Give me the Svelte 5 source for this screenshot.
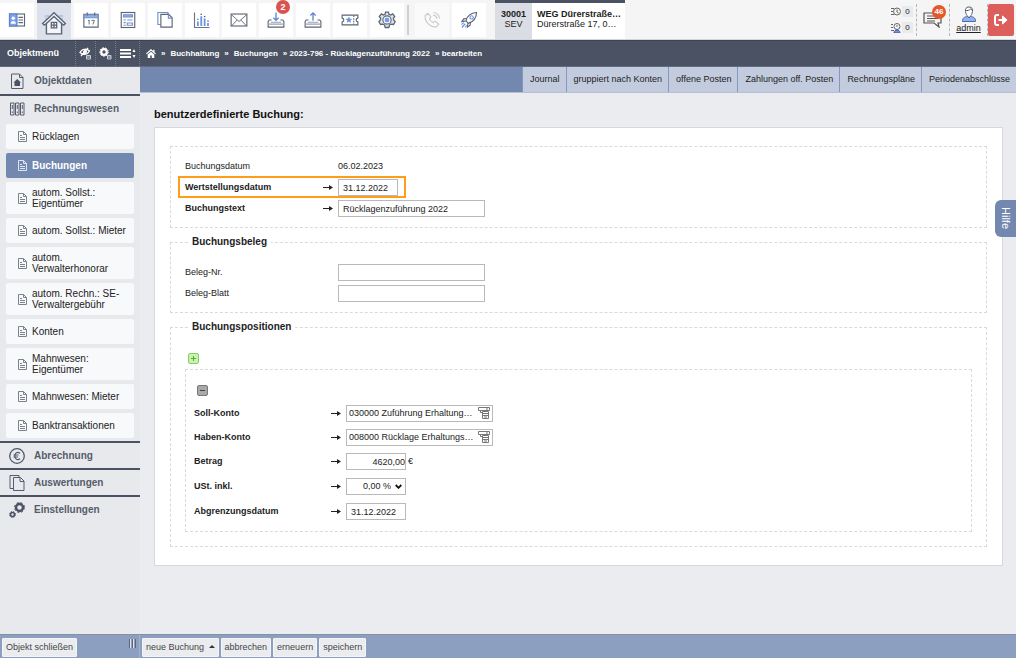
<script lang="ts">
  const tools = [
    { id: 'card', label: 'Adressen' },
    { id: 'house', label: 'Objekte', active: true },
    { id: 'calendar', label: 'Kalender' },
    { id: 'calc', label: 'Buchhaltung' },
    { id: 'docs', label: 'Dokumente' },
    { id: 'chart', label: 'Statistik' },
    { id: 'mail', label: 'Nachrichten' },
    { id: 'inbox', label: 'Eingang', badge: 2 },
    { id: 'outbox', label: 'Ausgang' },
    { id: 'ticket', label: 'Tickets' },
    { id: 'gear', label: 'Einstellungen' },
  ];
  const extraTools = [
    { id: 'phone', label: 'Telefon' },
    { id: 'rocket', label: 'Schnellstart' },
  ];

  const subItems = [
    'Rücklagen',
    'Buchungen',
    'autom. Sollst.: Eigentümer',
    'autom. Sollst.: Mieter',
    'autom. Verwalterhonorar',
    'autom. Rechn.: SE-Verwaltergebühr',
    'Konten',
    'Mahnwesen: Eigentümer',
    'Mahnwesen: Mieter',
    'Banktransaktionen',
  ];

  const tabs = [
    'Journal',
    'gruppiert nach Konten',
    'offene Posten',
    'Zahlungen off. Posten',
    'Rechnungspläne',
    'Periodenabschlüsse',
  ];

  let current = $state('Buchungen');
  let valueDate = $state('31.12.2022');
  let bookingText = $state('Rücklagenzuführung 2022');
  let docNo = $state('');
  let docPage = $state('');
  let debit = $state('030000 Zuführung Erhaltung…');
  let credit = $state('008000 Rücklage Erhaltungs…');
  let amount = $state('4620,00');
  let vat = $state('0,00 %');
  let accrualDate = $state('31.12.2022');
</script>

{#snippet toolIcon(id: string)}
  <svg class="tool-icon" class:big={id === 'house'} viewBox="0 0 24 24" fill="none" stroke="#5c6575" stroke-width="1.5" aria-hidden="true">
    {#if id === 'card'}
      <rect x="2" y="4" width="20" height="16" />
      <path d="M2 4h10v16H2z" fill="#7aa2ee" stroke="#5f82cc" />
      <circle cx="7" cy="9.500" r="2.200" fill="#fff" stroke="none" />
      <path d="M3.500 17c0-5 7-5 7 0z" fill="#fff" stroke="none" />
      <path d="M14 8.500h6M14 12h6M14 15.500h6" />
    {:else if id === 'house'}
      <path d="M3.500 5.500h4M16.500 5.500h4M4 8h2M18 8h2" stroke="#a8bce8" />
      <path d="M12 2.500 1.500 12.500l1.500 1.500 2-1.500V22h14v-9.500l2 1.500 1.500-1.500z" fill="#f4f6fb" stroke-width="1.300" />
      <path d="M5 12.500 12 6l7 6.500" stroke-width="1.200" />
      <path d="M9.500 11.500h5v5h-5zM12 11.500v5M9.500 14h5" stroke-width="1.200" />
    {:else if id === 'calendar'}
      <path d="M2.500 4.500h19v17h-19z" />
      <path d="M2.500 5h19v4h-19z" fill="#8fb0ee" stroke="#7590c8" />
      <path d="M7 2v4M17 2v4" />
      <path d="m8 13 1.500-1v6M12.500 12.500h4l-2 5.500" stroke-width="1.200" />
    {:else if id === 'calc'}
      <rect x="3" y="2" width="18" height="20" />
      <path d="M6 5h12v3H6z" fill="#8fb0ee" stroke="#7590c8" />
      <path d="M6 12h3M11 12h7M6 15.500h3M6 19h3M11 16h7v3h-7z" stroke="#7590c8" />
    {:else if id === 'docs'}
      <path d="M6 18H2.500V2H16v2.500" stroke="#6f8fd0" />
      <path d="M6.500 4.500H17l4.500 4.500v12.500h-15z" fill="#fff" />
      <path d="M16.500 4.500v5h5" stroke="#6f8fd0" />
    {:else if id === 'chart'}
      <path d="M2 2v20h20" stroke="#6d7583" />
      <path d="M6.500 14v6M11 7v13M15.500 10v10M20 16v4" stroke="#6c93df" stroke-width="2.400" />
      <path d="M5.500 11h2M10 4.500h2M14.500 7.500h2M19 13.500h2" stroke="#56637d" />
    {:else if id === 'mail'}
      <rect x="1.500" y="4" width="21" height="16" />
      <path d="m2 5 10 9L22 5M2 20l7.500-8M22 20l-7.500-8" stroke-width="1.200" />
    {:else if id === 'inbox' || id === 'outbox'}
      <path d="M6 12H3l-1.500 2v7.500h21V14L21 12h-3" />
      <path d="M2 17.500h20M5 15h14" stroke="#9aa1ad" />
      {#if id === 'inbox'}
        <path d="M12 2v10M8.500 9l3.500 3.500L15.500 9" stroke="#5f86d6" stroke-width="1.800" />
      {:else}
        <path d="M12 13V3M8.500 6 12 2.500 15.500 6" stroke="#5f86d6" stroke-width="1.800" />
      {/if}
    {:else if id === 'ticket'}
      <path d="M1.500 5.500h21v4c-3 .5-3 4.500 0 5v4h-21v-4c3-.5 3-4.500 0-5z" />
      <path d="M17 6v12" stroke-dasharray="2 1.500" />
      <path d="m10.500 8.500 1 2.300 2.500.2-2 1.500.6 2.500-2.100-1.300L8.400 15l.6-2.500L7 11l2.500-.2z" fill="#6c93df" stroke="#6c93df" stroke-width="1" />
    {:else if id === 'gear'}
      <path d="m10 1.500h4l.6 3 2.200 1 2.800-1.600 2.700 3.500-1.800 2.300.4 2.300 2 2.200-2.200 3.800-3-.6-2.300 1.300-.9 3.300h-4.900l-.9-3.300-2.300-1.300-3 .6L1.200 14.200l2-2.200.4-2.300-1.900-2.300 2.800-3.500 2.700 1.600 2.200-1z" fill="#dfe2e8" stroke-width="1.700" />
      <circle cx="12" cy="12" r="5.500" fill="#fff" />
      <circle cx="12" cy="12" r="2.500" fill="#6f9bf0" stroke="#6f9bf0" />
    {:else if id === 'phone'}
      <g stroke="#c8c9cb">
        <path d="m3 6 3.500-3 4 5-2 2.500c1 2.500 2.500 4 5 5l2.500-2 5 4-3 3.500C10.500 22.500 1.500 14 3 6z" />
        <path d="M14 2c4.500.5 7.500 3.500 8 8M13.500 5.500c3 .3 4.800 2 5 5" />
      </g>
    {:else}
      <path d="M8 13c1.500-6 6-10.500 14-11 0 7.500-4.500 12.500-11 14.500z" />
      <circle cx="15.500" cy="8.500" r="2.200" stroke="#6c93df" />
      <path d="m9 10-4 .5L2.500 14l5-.5M14 15l-.5 4-3.500 2.500.5-5" />
      <path d="m7 17-4.500 5M5 15.500 2 18M9 19l-2 3" stroke="#6c93df" />
    {/if}
  </svg>
{/snippet}

{#snippet pageIcon()}
  <svg class="page-icon" viewBox="0 0 9 11" fill="none" stroke="currentColor" aria-hidden="true">
    <path d="M.5.5h5l3 3v7h-8zM5.500.5v3h3M2 4.500h2M2 6.500h5M2 8.500h5" />
  </svg>
{/snippet}

{#snippet arrow()}
  <svg class="arrow" viewBox="0 0 10 7" aria-hidden="true">
    <path d="M0 3.500h7" stroke="#222" />
    <path d="m6 1 4 2.500L6 6z" fill="#222" />
  </svg>
{/snippet}

{#snippet pickIcon()}
  <svg viewBox="0 0 12 12" width="12" height="12" fill="none" stroke="#777" aria-hidden="true">
    <path d="M.5.5h11v3H.5zM8 2h2M2.500 3.500v2h2M4.500 4.500h6v7h-6zM4.500 6.500h6M4.500 8.500h6M6 10h3" />
  </svg>
{/snippet}

<div class="page">
  <header class="topbar">
    <nav class="tools" aria-label="Module">
      {#each tools as tool}
        <button class="tool" class:active={tool.active} aria-label={tool.label}>
          {@render toolIcon(tool.id)}
          {#if tool.badge}<span class="badge">{tool.badge}</span>{/if}
        </button>
      {/each}
      <span class="divider"></span>
      {#each extraTools as tool}
        <button class="tool" class:faded={tool.id === 'phone'} aria-label={tool.label}>{@render toolIcon(tool.id)}</button>
      {/each}
    </nav>

    <div class="object">
      <div class="object-no"><b>30001</b><span>SEV</span></div>
      <div class="object-name"><b>WEG Dürerstraße…</b><span>Dürerstraße 17, 0…</span></div>
    </div>

    <div class="user-area">
      <div class="counters">
        <div class="counter">
          <svg viewBox="0 0 10 10" fill="none" stroke="#666" aria-hidden="true">
            <circle cx="6" cy="4.500" r="3.500" /><path d="M6 2.500v2.500l1.500 1M0 1.500h3M0 4.500h2M0 7.500h3" />
          </svg>
          <span>0</span>
        </div>
        <div class="counter">
          <svg viewBox="0 0 10 10" fill="none" stroke="#666" aria-hidden="true">
            <circle cx="6" cy="3.500" r="3" /><path d="M6 2v2M0 1.500h2M0 4.500h2M0 7.500h3" />
            <path d="M3 10c0-4 6-4 6 0z" fill="#6c93df" stroke="#3d5f9f" />
          </svg>
          <span>0</span>
        </div>
      </div>
      <button class="messages" aria-label="Mitteilungen">
        <svg viewBox="0 0 20 17" width="20" height="17" fill="none" stroke="#555" stroke-width="1.200" aria-hidden="true">
          <path d="M1 2h17v10h-3l1 4-5-4H1zM4 5h11M4 7.500h11M4 10h8" />
        </svg>
        <span class="badge orange">46</span>
      </button>
      <a class="admin" href="#admin">
        <svg viewBox="0 0 16 16" width="16" height="16" aria-hidden="true">
          <path d="M1.500 15.500c0-4 2-4.500 5-5h3c3 .5 5 1 5 5z" fill="#8fb2f2" stroke="#4d6ca8" />
          <path d="M8 1c3 0 4 2 3.500 4.500-.4 2.500-1.500 4-2 4.500L8 12l-1.500-2c-.5-.5-1.600-2-2-4.500C4 3 5 1 8 1z" fill="#fff" stroke="#555c6b" />
          <path d="M4.500 4.500c2 .5 4-.5 5-1.500l2 1.500" fill="none" stroke="#555c6b" />
        </svg>
        admin
      </a>
      <button class="logout" aria-label="Abmelden">
        <svg viewBox="0 0 14 12" width="14" height="12" fill="none" stroke="#fff" stroke-width="2" aria-hidden="true">
          <path d="M5 1H3Q1 1 1 3v6q0 2 2 2h2M4.500 6H10" />
          <path d="m8.500 2 4.500 4-4.500 4z" fill="#fff" stroke-width="1" />
        </svg>
      </button>
    </div>
  </header>

  <div class="darkbar">
    <div class="menu-head">
      <span class="menu-title">Objektmenü</span>
      <button aria-label="Ausblenden">
        <svg viewBox="0 0 13 13" width="13" height="13" fill="none" stroke="#fff" aria-hidden="true">
          <path d="M1 5.500C3 1.500 8 1.500 10.500 4 8.500 8 4 8.500 1 5.500zM2 9l7-8" stroke-width="1.300" />
          <circle cx="6" cy="5" r="1.500" fill="#fff" />
          <path d="M7.500 8.500h4v3.500h-4zM8 10h3" stroke="#c9ccd3" />
        </svg>
      </button>
      <button aria-label="Konfiguration">
        <svg viewBox="0 0 13 13" width="13" height="13" fill="none" stroke="#fff" aria-hidden="true">
          <circle cx="5" cy="5" r="2.800" stroke-width="2.200" />
          <circle cx="5" cy="5" r="4.300" stroke-dasharray="1.500 1.500" />
          <path d="M8.500 8.500h3.500v3.500H8.500zM9 10h3" stroke="#c9ccd3" />
        </svg>
      </button>
      <button aria-label="Menü einklappen">
        <svg viewBox="0 0 16 9" width="16" height="9" fill="#fff" aria-hidden="true">
          <path d="M0 0h11v2H0zM0 3.500h11v2H0zM0 7h11v2H0zM12.500 3 14 0l1.500 3zM12.500 6 14 9l1.500-3z" />
        </svg>
      </button>
    </div>
    <nav class="crumbs" aria-label="Pfad">
      <a href="#home" aria-label="Start">
        <svg viewBox="0 0 10 9" width="10" height="9" fill="#fff" aria-hidden="true">
          <path d="M5 0 0 4.500l.8.8L5 1.700l4.200 3.600.8-.8-1.500-1.300V.8h-1.300V2zM5 2.700 1.700 5.500V9h2.500V6.500h1.600V9h2.500V5.500z" />
        </svg>
      </a>
      <span>»</span>
      <a href="#buchhaltung">Buchhaltung</a>
      <span>»</span>
      <a href="#buchungen">Buchungen</a>
      <a href="#buchung">» 2023-796 - Rücklagenzuführung 2022</a>
      <a href="#bearbeiten">» bearbeiten</a>
    </nav>
  </div>

  <div class="body">
    <aside class="sidebar">
      <button class="group">
        <svg viewBox="0 0 16 16" fill="none" stroke="#555d6c" aria-hidden="true">
          <path d="M2.500 1h8l3.500 3.500V15.500H2.500zM10.500 1v3.500H14" />
          <path d="M8.200 6 4.500 9.500h1V13h5.500V9.500h1z" fill="#4b5263" stroke="none" />
        </svg>
        Objektdaten
      </button>
      <button class="group open">
        <svg viewBox="0 0 16 16" fill="none" stroke="#555d6c" aria-hidden="true">
          <path d="M1.500 2h3.500v12H1.500zM6.500 2H10v12H6.500zM11.500 2H15v12h-3.500zM3.300 4v4M8.300 4v4M13.300 4v4M3.300 10.500v1.500M8.300 10.500v1.500M13.300 10.500v1.500" />
        </svg>
        Rechnungswesen
      </button>
      <ul class="sub">
        {#each subItems as item}
          <li>
            <button class:current={item === current} onclick={() => (current = item)}>
              {@render pageIcon()}
              <span>{item}</span>
            </button>
          </li>
        {/each}
      </ul>
      <button class="group line">
        <svg viewBox="0 0 16 16" fill="none" stroke="#4f5868" aria-hidden="true">
          <circle cx="8" cy="8" r="7.300" stroke-width="1.300" />
          <path d="M11 5.200C8.500 3.200 5.800 5 5.800 8s2.700 4.800 5.200 2.800M4.500 7h5M4.500 9h4.500" stroke-width="1.200" />
        </svg>
        Abrechnung
      </button>
      <button class="group line">
        <svg viewBox="0 0 16 16" fill="none" stroke="#555d6c" aria-hidden="true">
          <path d="M4 13.500H1V.5h9v2" /><path d="M4.500 2.500h7l3.500 3.500v9.500H4.500zM11 2.500v4h4" />
        </svg>
        Auswertungen
      </button>
      <button class="group line">
        <svg viewBox="0 0 16 16" fill="none" stroke="#4b5263" aria-hidden="true">
          <circle cx="10.500" cy="5.500" r="3.500" stroke-width="2.400" />
          <circle cx="10.500" cy="5.500" r="5" stroke-dasharray="2 2" />
          <circle cx="3.500" cy="12.500" r="2" stroke-width="1.600" />
          <circle cx="3.500" cy="12.500" r="3" stroke-dasharray="1.200 1.200" />
        </svg>
        Einstellungen
      </button>
    </aside>

    <main>
      <nav class="tabs" aria-label="Ansichten">
        {#each tabs as tab}
          <a href="#{tab}">{tab}</a>
        {/each}
      </nav>

      <div class="content">
        <h1>benutzerdefinierte Buchung:</h1>
        <form class="panel" id="booking" onsubmit={(e) => e.preventDefault()}>
          <fieldset class="first">
            <div class="row">
              <span class="label">Buchungsdatum</span>
              <span class="value">06.02.2023</span>
            </div>
            <div class="row required marked">
              <label class="label" for="value-date">Wertstellungsdatum {@render arrow()}</label>
              <input id="value-date" class="short" bind:value={valueDate} />
            </div>
            <div class="row required">
              <label class="label" for="text">Buchungstext {@render arrow()}</label>
              <input id="text" bind:value={bookingText} />
            </div>
          </fieldset>

          <fieldset>
            <legend>Buchungsbeleg</legend>
            <div class="row">
              <label class="label" for="doc-no">Beleg-Nr.</label>
              <input id="doc-no" bind:value={docNo} />
            </div>
            <div class="row">
              <label class="label" for="doc-page">Beleg-Blatt</label>
              <input id="doc-page" bind:value={docPage} />
            </div>
          </fieldset>

          <fieldset class="positions">
            <legend>Buchungspositionen</legend>
            <div class="action">
              <button type="button" class="square add" aria-label="Position hinzufügen">
                <svg viewBox="0 0 7 7" width="7" height="7" stroke="#5fa544" aria-hidden="true"><path d="M3.500 1v5M1 3.500h5" /></svg>
              </button>
            </div>
            <div class="position">
              <div class="action">
                <button type="button" class="square remove" aria-label="Position entfernen">
                  <svg viewBox="0 0 7 7" width="7" height="7" stroke="#444" aria-hidden="true"><path d="M1 3.500h5" /></svg>
                </button>
              </div>
              <div class="row required">
                <label class="label" for="debit">Soll-Konto {@render arrow()}</label>
                <div class="picker">
                  <input id="debit" bind:value={debit} />
                  <button type="button" aria-label="Soll-Konto wählen">{@render pickIcon()}</button>
                </div>
              </div>
              <div class="row required">
                <label class="label" for="credit">Haben-Konto {@render arrow()}</label>
                <div class="picker">
                  <input id="credit" bind:value={credit} />
                  <button type="button" aria-label="Haben-Konto wählen">{@render pickIcon()}</button>
                </div>
              </div>
              <div class="row tall required">
                <label class="label" for="amount">Betrag {@render arrow()}</label>
                <input id="amount" class="short amount" bind:value={amount} />
                <span class="unit">€</span>
              </div>
              <div class="row tall required">
                <label class="label" for="vat">USt. inkl. {@render arrow()}</label>
                <div class="select">
                  <select id="vat" bind:value={vat}>
                    <option>0,00 %</option>
                    <option>7,00 %</option>
                    <option>19,00 %</option>
                  </select>
                  <svg viewBox="0 0 7 5" width="7" height="5" fill="none" stroke="#111" stroke-width="1.800" aria-hidden="true"><path d="m.7 1 2.800 2.800L6.300 1" /></svg>
                </div>
              </div>
              <div class="row tall required">
                <label class="label" for="accrual">Abgrenzungsdatum {@render arrow()}</label>
                <input id="accrual" class="short" bind:value={accrualDate} />
              </div>
            </div>
          </fieldset>
        </form>
      </div>
    </main>
  </div>

  <footer>
    <div class="foot-left">
      <button>Objekt schließen</button>
      <span class="grip"></span>
    </div>
    <div class="foot-actions">
      <button>neue Buchung <i class="up"></i></button>
      <button>abbrechen</button>
      <button>erneuern</button>
      <button type="submit" form="booking">speichern</button>
    </div>
  </footer>

  <button class="help">Hilfe</button>
</div>

<style>
  :global(body) {
    margin: 0;
  }

  .page {
    --dark: #4b5263;
    --blue: #7388af;
    display: flex;
    flex-direction: column;
    min-height: 100vh;
    background: #ebecf0;
    color: #222;
    font: 9px/11px "Liberation Sans", Arial, sans-serif;
  }

  .page * {
    box-sizing: border-box;
  }

  button,
  input,
  select {
    font: inherit;
    color: inherit;
    margin: 0;
    padding: 0;
    border: 0;
    background: none;
  }

  a {
    color: inherit;
    text-decoration: none;
  }

  /* top bar */
  .topbar {
    display: flex;
    height: 40px;
    background: #f5f5f5;
    border-bottom: 1px solid #d3d5da;
  }

  .tools {
    display: flex;
    align-items: center;
    gap: 3px;
    height: 39px;
  }

  .tool {
    position: relative;
    display: flex;
    align-items: center;
    justify-content: center;
    width: 34px;
    height: 34px;
    background: #fff;
  }

  .tool.active {
    height: 39px;
    padding-top: 3px;
    background: #dce1eb;
    border-top: 3px solid var(--dark);
  }

  .tool.faded {
    background: #fafafa;
  }

  .tool-icon {
    width: 18px;
    height: 18px;
  }

  .tool-icon.big {
    width: 26px;
    height: 26px;
  }

  .badge {
    position: absolute;
    top: -3px;
    right: 3px;
    width: 14px;
    height: 14px;
    border-radius: 50%;
    background: #d9534f;
    color: #fff;
    font-weight: bold;
    line-height: 14px;
    text-align: center;
  }

  .badge.orange {
    top: 5px;
    background: #e3592b;
    font-size: 8px;
  }

  .divider {
    width: 2px;
    height: 30px;
    margin-right: 3px;
    background: #d0d0d0;
  }

  .object {
    display: flex;
    margin-left: 9px;
    background: #fff;
    border-top: 3px solid var(--dark);
    line-height: 10px;
  }

  .object-no,
  .object-name {
    display: flex;
    flex-direction: column;
    padding-top: 6px;
  }

  .object-no {
    width: 37px;
    background: #dadde3;
    text-align: center;
  }

  .object-name {
    width: 93px;
    padding-left: 5px;
    white-space: nowrap;
  }

  .user-area {
    display: flex;
    align-items: center;
    margin-left: auto;
    padding-right: 2px;
  }

  .counters {
    display: flex;
    flex-direction: column;
    gap: 5px;
    padding-right: 3px;
  }

  .counter {
    display: flex;
    align-items: center;
    gap: 1px;
  }

  .counter svg {
    width: 10px;
    height: 10px;
  }

  .counter span {
    width: 11px;
    background: #e9eaed;
    font-size: 8px;
    text-align: center;
  }

  .messages,
  .admin {
    position: relative;
    display: flex;
    flex-direction: column;
    align-items: center;
    justify-content: center;
    height: 32px;
    border-left: 1px dashed #b5b5b5;
  }

  .messages {
    width: 33px;
  }

  .messages .badge {
    top: 1px;
  }

  .admin {
    width: 39px;
    gap: 1px;
    border-right: 1px dashed #b5b5b5;
    text-decoration: underline;
  }

  .logout {
    display: flex;
    align-items: center;
    justify-content: center;
    width: 26px;
    height: 32px;
    border-radius: 2px;
    background: #dc5f5c;
  }

  /* dark bar with menu head and breadcrumb */
  .darkbar {
    display: flex;
    height: 27px;
    background: var(--dark);
    border-top: 1px solid #3b4252;
    border-bottom: 1px solid #5f6b84;
    color: #fff;
    font-weight: bold;
  }

  .menu-head {
    display: flex;
    width: 140px;
    align-items: stretch;
    border-right: 1px dotted #747b8a;
  }

  .menu-title {
    flex: 1;
    padding-left: 7px;
    line-height: 25px;
  }

  .menu-head button {
    display: flex;
    align-items: center;
    justify-content: center;
    width: 20px;
    border-left: 1px dotted #747b8a;
  }

  .menu-head button:last-child {
    width: 24px;
  }

  .crumbs {
    display: flex;
    align-items: center;
    gap: 5px;
    padding-left: 6px;
    font-size: 8px;
  }

  .crumbs svg {
    display: block;
  }

  /* sidebar */
  .body {
    display: flex;
    flex: 1;
  }

  .sidebar {
    width: 140px;
    flex: none;
    background: #e8e9ed;
  }

  .group {
    display: flex;
    align-items: center;
    gap: 9px;
    width: 100%;
    height: 27px;
    padding-left: 9px;
    color: #555c69;
    font-size: 10px;
    font-weight: bold;
  }

  .group svg {
    width: 16px;
    height: 16px;
  }

  .group.open,
  .group.line {
    border-top: 2px solid var(--dark);
  }

  .sub {
    display: flex;
    flex-direction: column;
    gap: 4px;
    margin: 0;
    padding: 3px 6px;
    list-style: none;
  }

  .sub button {
    display: flex;
    align-items: center;
    gap: 5px;
    width: 100%;
    min-height: 25px;
    padding: 5px 4px 5px 12px;
    border-radius: 2px;
    background: #f8f9fb;
    font-size: 10px;
    line-height: 11px;
    text-align: left;
  }

  .sub span {
    flex: 1;
  }

  .sub button.current {
    background: var(--blue);
    color: #fff;
    font-weight: bold;
  }

  .page-icon {
    width: 9px;
    height: 11px;
    flex: none;
    color: #7c828d;
  }

  .current .page-icon {
    color: #dfe6f3;
  }

  /* main area */
  main {
    flex: 1;
    min-width: 0;
  }

  .tabs {
    display: flex;
    justify-content: flex-end;
    height: 26px;
    background: var(--blue);
    border-bottom: 1px solid #b5c0d6;
  }

  .tabs a {
    padding: 0 6px 0 7px;
    background: #c3ccde;
    border-left: 1px solid #8498be;
    line-height: 25px;
    white-space: nowrap;
  }

  .content {
    padding: 15px 13px 16px 14px;
  }

  h1 {
    margin: 0 0 7px;
    color: #111;
    font-size: 11px;
    line-height: 12px;
  }

  .panel {
    padding: 18px 15px;
    background: #fff;
    border: 1px solid #d6d8df;
  }

  fieldset {
    min-width: 0;
    margin: 8px 0 0;
    padding: 14px 14px 8px;
    border: 1px dashed #d9dadf;
  }

  fieldset.first {
    margin: 0;
    padding-top: 9px;
  }

  fieldset.positions {
    padding-bottom: 14px;
  }

  legend {
    margin-left: 3px;
    padding: 0 4px;
    font-size: 10px;
    font-weight: bold;
    line-height: 12px;
  }

  .row {
    position: relative;
    display: flex;
    align-items: center;
    width: fit-content;
    height: 21px;
  }

  .label {
    display: flex;
    align-items: center;
    justify-content: space-between;
    width: 153px;
    padding-right: 5px;
  }

  .required .label {
    font-weight: bold;
  }

  .arrow {
    width: 10px;
    height: 7px;
  }

  /* frame round the highlighted row */
  .marked::after {
    content: '';
    position: absolute;
    inset: -1px -8px 0 -7px;
    border: 2px solid #ff9c1a;
    pointer-events: none;
  }

  .row > input,
  .picker,
  select {
    width: 147px;
    height: 17px;
    padding: 0 4px;
    border: 1px solid #b9b9b9;
    background: #fff;
  }

  .row > input.short,
  select {
    width: 60px;
  }

  .row > input.amount {
    padding: 0;
    text-align: right;
  }

  .unit {
    padding-left: 2px;
  }

  .position {
    padding: 9px 8px 7px;
    border: 1px dashed #d9dadf;
  }

  .position .row {
    height: 24px;
  }

  .position .row.tall {
    height: 25px;
  }

  .position .label {
    width: 152px;
  }

  .picker {
    display: flex;
    align-items: center;
    padding: 0 2px;
  }

  .picker input {
    flex: 1;
    min-width: 0;
  }

  .picker button {
    display: flex;
  }

  .select {
    position: relative;
    display: flex;
  }

  select {
    appearance: none;
    padding: 0 14px 0 0;
    border-radius: 0;
    text-align: right;
  }

  .select svg {
    position: absolute;
    top: 6px;
    right: 4px;
    pointer-events: none;
  }

  .action {
    display: flex;
    align-items: center;
    height: 22px;
    padding-left: 3px;
  }

  .square {
    display: flex;
    align-items: center;
    justify-content: center;
    width: 11px;
    height: 11px;
    border-radius: 2px;
  }

  .add {
    background: #c8f3ab;
    border: 1px solid #8bcb6b;
  }

  .remove {
    background: #a9a9a9;
    border: 1px solid #777;
  }

  /* bottom bar */
  footer {
    display: flex;
    height: 24px;
    background: #8c9fc0;
    border-top: 1px solid #8790a3;
  }

  .foot-left {
    display: flex;
    justify-content: space-between;
    width: 140px;
    padding: 3px 3px 0 2px;
    border-right: 1px solid #a5b3cd;
  }

  .foot-actions {
    display: flex;
    gap: 2px;
    padding: 3px 2px 0;
  }

  footer button {
    height: 19px;
    padding: 0 3px;
    border: 1px solid #f4f5f8;
    border-radius: 1px;
    background: #ebecf0;
    color: #444;
    white-space: nowrap;
  }

  .up {
    display: inline-block;
    margin-left: 2px;
    border: 3px solid transparent;
    border-top: 0;
    border-bottom-color: #333;
    vertical-align: 2px;
  }

  .grip {
    width: 7px;
    height: 9px;
    margin-top: 1px;
    background: repeating-linear-gradient(90deg, #5b6679 0 1px, #dfe4ed 1px 2px, #8c9fc0 2px 3px);
  }

  .help {
    position: fixed;
    top: 200px;
    right: 0;
    width: 21px;
    height: 37px;
    border-radius: 6px 0 0 6px;
    background: var(--blue);
    color: #fff;
    font-size: 11px;
    writing-mode: vertical-rl;
    text-align: center;
  }
</style>
